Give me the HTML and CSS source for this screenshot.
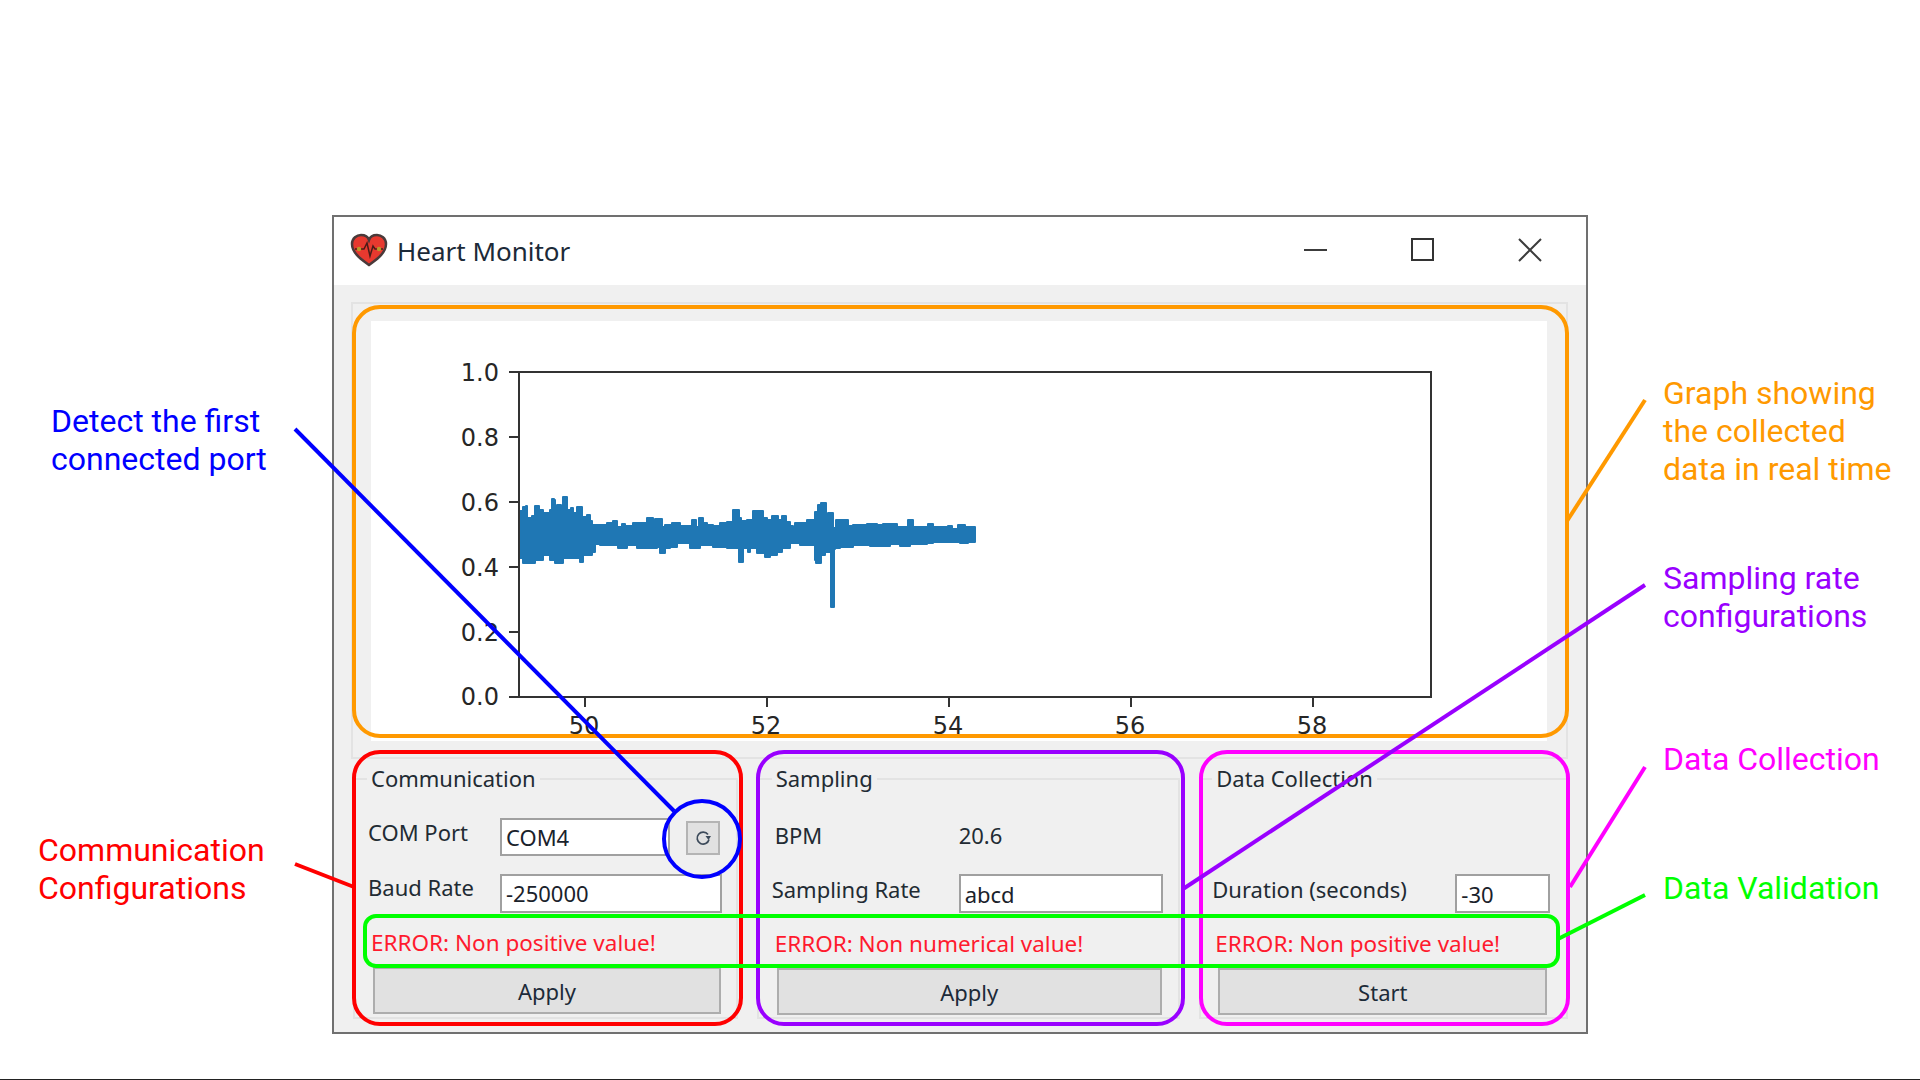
FILE: index.html
```html
<!DOCTYPE html>
<html lang="en">
<head>
<meta charset="utf-8">
<title>Heart Monitor</title>
<link rel="stylesheet" href="styles.css">
</head>
<body>
<div class="stage">
  <div class="window">
    <header class="titlebar">
      <svg class="app-icon" viewBox="0 0 38 34" width="38" height="34">
        <path d="M19 32 C14 28 2 21 2 11 C2 5 7 2 11 2 C15 2 18 4 19 7 C20 4 23 2 27 2 C31 2 36 5 36 11 C36 21 24 28 19 32 Z" fill="#e8392f" stroke="#4a3a3a" stroke-width="2.5"/>
        <path d="M5 16 H14 L17 10 L20 23 L23 13 L25 16 H33" fill="none" stroke="#4a1c18" stroke-width="1.5"/>
        <circle cx="9" cy="16" r="2.2" fill="#b89a2c"/>
        <circle cx="29" cy="16" r="2.2" fill="#b89a2c"/>
      </svg>
      <span class="title">Heart Monitor</span>
      <div class="controls">
        <svg class="ctl" viewBox="0 0 24 24" width="24" height="24"><path d="M0 12 H23" stroke="#3c3c3c" stroke-width="2"/></svg>
        <svg class="ctl" viewBox="0 0 24 24" width="24" height="24"><rect x="1" y="1" width="21" height="21" fill="none" stroke="#333" stroke-width="2"/></svg>
        <svg class="ctl" viewBox="0 0 24 24" width="24" height="24"><path d="M1 1 L23 23 M23 1 L1 23" stroke="#3c3c3c" stroke-width="2"/></svg>
      </div>
    </header>
    <main class="content">
      <section class="graph-frame">
        <div class="canvas">
          <svg class="plot" viewBox="371 321 1176 420" width="1176" height="420">
            <path class="signal" d="M519 511 H523 V507 H526 V506 H527 V518 H532 V516 H534 V520 H535 V506 H539 V510 H543 V513 H550 V510 H552 V499 H554 V500 H555 V510 H557 V505 H561 V510 H563 V497 H567 V510 H568 H571 V508 H573 V513 H577 V507 H582 V517 H587 V515 H590 V521 H592 V525 H607 V523 H613 V521 H617 V527 H622 V524 H625 V526 H633 V523 H647 V518 H653 V527 H655 V519 H662 V527 H665 V525 H672 V523 H680 V526 H692 V520 H696 V527 H699 V518 H703 V523 H707 V525 H713 V526 H720 V523 H727 V522 H733 V510 H739 V518 H741 V521 H747 V520 H753 V511 H763 V518 H767 V520 H772 V516 H778 V520 H782 V516 H786 V522 H790 V526 H793 V528 H795 V523 H807 V520 H815 V512 H818 V505 H821 V503 H826 V522 H828 V513 H833 V528 H836 V520 H848 V526 H853 V525 H867 V524 H877 V525 H883 V524 H897 V527 H908 V520 H913 V527 H928 V524 H933 V527 H948 V526 H952 V529 H958 V525 H965 V527 H975 V542 H968 V543 H960 V542 H933 V543 H927 V544 H910 V546 H900 V544 H890 V546 H870 V545 H853 V547 H840 V548 H835 V549 H834 V607 H831 V552 H825 V555 H821 V563 H816 V560 H815 V545 H800 V543 H790 V548 H782 V552 H777 V555 H770 V557 H765 V553 H757 V548 H750 V552 H748 V548 H743 V562 H739 V548 H727 V547 H713 V545 H700 V548 H690 V543 H677 V547 H670 V548 H665 V553 H660 V547 H657 V548 H637 V545 H627 V548 H618 V545 H600 V544 H595 V552 H592 V555 H583 V562 H580 V558 H563 V563 H555 V560 H550 V555 H543 V560 H535 V563 H523 V558 H519 V555 Z"/>
            <g class="axes">
              <rect x="519" y="372" width="912" height="325"/>
              <path d="M509 372 H519 M509 437 H519 M509 502 H519 M509 567 H519 M509 632 H519 M509 697 H519 M585 697 V707 M767 697 V707 M949 697 V707 M1131 697 V707 M1313 697 V707"/>
            </g>
            <g class="yt">
              <text x="499" y="381">1.0</text>
              <text x="499" y="446">0.8</text>
              <text x="499" y="511">0.6</text>
              <text x="499" y="576">0.4</text>
              <text x="499" y="641">0.2</text>
              <text x="499" y="705">0.0</text>
            </g>
            <g class="xt">
              <text x="584" y="734">50</text>
              <text x="766" y="734">52</text>
              <text x="948" y="734">54</text>
              <text x="1130" y="734">56</text>
              <text x="1312" y="734">58</text>
            </g>
          </svg>
        </div>
      </section>
      <section class="groups">
        <div class="group comm">
          <div class="group-title">Communication</div>
          <div class="row r1">
            <span class="lbl w-comm">COM Port</span>
            <div class="field combo">COM4</div>
            <button class="refresh" type="button" aria-label="Refresh">
              <svg viewBox="0 0 18 18" width="18" height="18"><path d="M14 5.5 A6 6 0 1 0 15 10.5" fill="none" stroke="#3c4a5a" stroke-width="1.7"/><path d="M11.5 7 H17 L14.5 11 Z" fill="#3c4a5a"/></svg>
            </button>
          </div>
          <div class="row r2">
            <span class="lbl w-comm">Baud Rate</span>
            <div class="field baud">-250000</div>
          </div>
          <div class="error">ERROR: Non positive value!</div>
          <button class="btn" type="button">Apply</button>
        </div>
        <div class="group samp">
          <div class="group-title">Sampling</div>
          <div class="row r1">
            <span class="lbl w-samp">BPM</span>
            <span class="lbl value">20.6</span>
          </div>
          <div class="row r2">
            <span class="lbl w-rate">Sampling Rate</span>
            <div class="field rate">abcd</div>
          </div>
          <div class="error">ERROR: Non numerical value!</div>
          <button class="btn" type="button">Apply</button>
        </div>
        <div class="group data">
          <div class="group-title">Data Collection</div>
          <div class="row r1"></div>
          <div class="row r2">
            <span class="lbl w-data">Duration (seconds)</span>
            <div class="field dur">-30</div>
          </div>
          <div class="error">ERROR: Non positive value!</div>
          <button class="btn" type="button">Start</button>
        </div>
      </section>
    </main>
  </div>

  <svg class="marks" viewBox="0 0 1920 1080" width="1920" height="1080">
    <g fill="none" stroke-width="4">
      <rect x="354" y="307" width="1213" height="429" rx="26" stroke="#ff9900"/>
      <rect x="354" y="752" width="387" height="272" rx="26" stroke="#ff0000"/>
      <rect x="758" y="752" width="425" height="272" rx="26" stroke="#9900ff"/>
      <rect x="1201" y="752" width="367" height="272" rx="26" stroke="#ff00ff"/>
      <rect x="365" y="916" width="1193" height="50" rx="11" stroke="#00ff00"/>
      <circle cx="702" cy="839" r="38" stroke="#0000ff"/>
      <path d="M295 429 L674 811" stroke="#0000ff"/>
      <path d="M295 864 L354 887" stroke="#ff0000"/>
      <path d="M1567 521 L1645 400" stroke="#ff9900"/>
      <path d="M1183 889 L1645 585" stroke="#9900ff"/>
      <path d="M1570 887 L1645 767" stroke="#ff00ff"/>
      <path d="M1558 939 L1645 895" stroke="#00ff00"/>
    </g>
  </svg>

  <div class="note n-blue">Detect the first<br>connected port</div>
  <div class="note n-red">Communication<br>Configurations</div>
  <div class="note n-orange">Graph showing<br>the collected<br>data in real time</div>
  <div class="note n-purple">Sampling rate<br>configurations</div>
  <div class="note n-magenta">Data Collection</div>
  <div class="note n-green">Data Validation</div>
</div>
</body>
</html>
```
FILE: styles.css
```css
* { box-sizing: border-box; }
html, body { margin: 0; padding: 0; background: #fff; }
.stage {
  position: relative;
  width: 1920px;
  height: 1080px;
  overflow: hidden;
  padding: 215px 0 0 332px;
  border-bottom: 1px solid #222;
  font-family: "Noto Sans", sans-serif;
}
.window {
  width: 1256px;
  height: 819px;
  border: 2px solid #707070;
  background: #f0f0f0;
  display: flex;
  flex-direction: column;
}
.titlebar {
  height: 68px;
  flex: none;
  background: #fff;
  display: flex;
  align-items: center;
  padding: 0 44px 0 16px;
}
.app-icon { flex: none; margin-top: -3px; }
.title {
  margin-left: 9px;
  font-size: 26px;
  color: #1c2a38;
}
.controls {
  margin-left: auto;
  display: flex;
  gap: 83px;
  margin-top: -3px;
}
.content {
  flex: 1;
  padding: 17px 18px 0 17px;
  display: flex;
  flex-direction: column;
}
.graph-frame {
  height: 457px;
  border: 2px solid #e3e3e3;
  padding: 17px 17px 0 18px;
}
.canvas { background: #fff; width: 1176px; height: 420px; }
.plot { display: block; }
.signal { fill: #1f77b4; stroke: #1f77b4; stroke-width: 2; stroke-linejoin: round; }
.axes { fill: none; stroke: #333; stroke-width: 2; }
.yt text, .xt text { font-family: "DejaVu Sans", sans-serif; font-size: 24px; fill: #262626; }
.yt text { text-anchor: end; }
.xt text { text-anchor: middle; }
.groups {
  display: flex;
  gap: 19px;
  margin-top: 19px;
  margin-left: 2px;
}
.group {
  height: 241px;
  border: 2px solid #e3e3e3;
  padding: 0 0 0 14px;
  font-size: 22px;
  color: #222b33;
}
.comm { width: 385px; padding-left: 13px; }
.samp { width: 424px; }
.data { width: 369px; padding-left: 11px; }
.group-title {
  width: fit-content;
  background: #f0f0f0;
  padding: 0 4px;
  margin: -16px 0 0 0;
  line-height: 28px;
  height: 28px;
}
.comm .group-title { margin-left: -1px; }
.samp .group-title { margin-left: -1px; }
.row { display: flex; align-items: center; }
.r1 { height: 38px; margin-top: 26px; }
.r2 { height: 39px; margin-top: 18px; }
.lbl { flex: none; line-height: 28px; position: relative; top: -5px; }
.w-comm { width: 132px; }
.comm .r2 .lbl { top: -7px; }
.w-samp { width: 184px; margin-left: 2px; top: -2px; }
.w-rate { width: 187px; margin-left: -1px; }
.w-data { width: 243px; }
.value { top: -2px; }
.field {
  background: #fff;
  border: 2px solid #a0a0a0;
  height: 100%;
  padding: 0 4px;
  line-height: 36px;
  font-size: 22px;
  color: #1a222b;
}
.comm .field { line-height: 34px; }
.combo { width: 170px; }
.baud { width: 222px; }
.rate { width: 204px; }
.dur { width: 95px; }
.refresh {
  width: 34px;
  height: 34px;
  margin: 1px 0 0 16px;
  padding: 0;
  background: #e1e1e1;
  border: 2px solid #b4b4b4;
  display: flex;
  align-items: center;
  justify-content: center;
}
.error {
  color: #ff1a2e;
  height: 28px;
  line-height: 28px;
  margin: 17px 0 0 2px;
  font-size: 22.5px;
  white-space: nowrap;
}
.comm .error { margin: 16px 0 0 3px; }
.data .error { margin-left: 3px; }
.btn {
  display: block;
  height: 47px;
  margin: 10px 0 0 3px;
  background: #e1e1e1;
  border: 2px solid #adadad;
  font: inherit;
  color: #1c2a38;
  padding: 0;
}
.comm .btn { width: 348px; margin: 10px 0 0 5px; }
.samp .btn { width: 385px; margin-left: 4px; }
.data .btn { width: 329px; margin-left: 6px; }
.marks { position: absolute; left: 0; top: 0; pointer-events: none; }
.note {
  position: absolute;
  font-family: Roboto, sans-serif;
  font-size: 32px;
  line-height: 38px;
  white-space: nowrap;
}
.n-blue { left: 51px; top: 402px; color: #0000ff; }
.n-red { left: 38px; top: 831px; color: #ff0000; }
.n-orange { left: 1663px; top: 374px; color: #ff9900; }
.n-purple { left: 1663px; top: 559px; color: #9900ff; }
.n-magenta { left: 1663px; top: 740px; color: #ff00ff; }
.n-green { left: 1663px; top: 869px; color: #00ff00; }
```
